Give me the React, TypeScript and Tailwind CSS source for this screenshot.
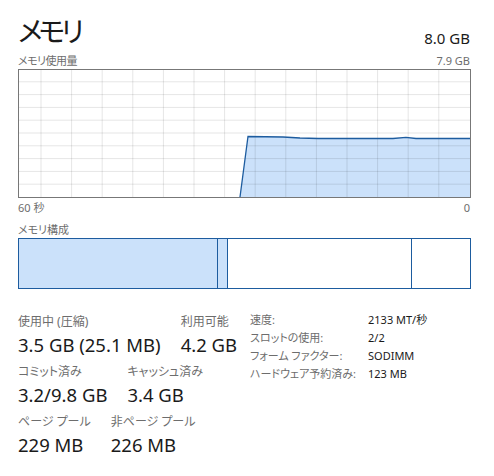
import React from 'react'

const font = "[font-family:'Noto_Sans','Noto_Sans_CJK_JP',sans-serif] [font-feature-settings:'palt']"

const vLines = Array.from({ length: 14 }, (_, i) => 23 + i * 30.6)
const hLines = Array.from({ length: 9 }, (_, i) => (i + 1) * 12.8)

function UsageGraph() {
  const pts = '222,128 230,67.5 265,68 282,69 300,69.5 375,69.5 388,68.4 398,69.5 452,69.5'
  return (
    <svg width="453" height="129" viewBox="0 0 453 129" className="block">
      <rect x="0" y="0" width="453" height="129" fill="#fff" />
      <polygon points={`${pts} 452,128.5 222,128.5`} fill="#cbe1fa" />
      {vLines.map((x) => (
        <line key={x} x1={x} y1="0" x2={x} y2="129" stroke="rgba(0,0,0,0.1)" strokeWidth="1" />
      ))}
      {hLines.map((y) => (
        <line key={y} x1="0" y1={y} x2="453" y2={y} stroke="rgba(0,0,0,0.1)" strokeWidth="1" />
      ))}
      <polyline points={pts} fill="none" stroke="#1d5c9f" strokeWidth="1.3" />
      <rect x="0.5" y="0.5" width="452" height="128" fill="none" stroke="#777" strokeWidth="1" />
    </svg>
  )
}

function Stat({ label, value }: { label: string; value: string }) {
  return (
    <div className="flex flex-col whitespace-nowrap">
      <span className="text-[12px] leading-[16px] text-[#6d6d6d]">{label}</span>
      <span className="text-[18.5px] leading-[26px] mt-[2px] text-[#1a1a1a]">{value}</span>
    </div>
  )
}

export default function App() {
  return (
    <div className={`w-[494px] h-[476px] bg-white pl-[18px] pr-[24px] pt-[13px] ${font}`}>
      <div className="flex items-end justify-between">
        <h1 className="text-[28px] leading-[36px] tracking-[-4px] text-[#1a1a1a]">メモリ</h1>
        <span className="text-[15px] leading-[20px] text-[#1a1a1a] mb-[1px]">8.0 GB</span>
      </div>
      <div className="flex justify-between text-[11px] leading-[16px] text-[#6d6d6d] mt-[4px]">
        <span className="tracking-[-0.5px]">メモリ使用量</span>
        <span>7.9 GB</span>
      </div>
      <UsageGraph />
      <div className="flex justify-between text-[11px] leading-[16px] text-[#6d6d6d] mt-[2px]">
        <span>60 秒</span>
        <span>0</span>
      </div>
      <div className="text-[11px] leading-[16px] text-[#6d6d6d] mt-[6px]">メモリ構成</div>
      <div className="flex h-[51px] w-[453px] border border-[#1d5c9f]">
        <div className="w-[199px] bg-[#cbe1fa] border-r border-[#1d5c9f]" />
        <div className="w-[10px] bg-[#cbe1fa] border-r border-[#1d5c9f]" />
        <div className="w-[184px] border-r border-[#1d5c9f]" />
        <div className="flex-1" />
      </div>
      <div className="flex items-start mt-[25px]">
        <div className="w-[232px] flex flex-col gap-[6px]">
          <div className="flex gap-[20px]">
            <Stat label="使用中 (圧縮)" value="3.5 GB (25.1 MB)" />
            <Stat label="利用可能" value="4.2 GB" />
          </div>
          <div className="flex gap-[20px]">
            <Stat label="コミット済み" value="3.2/9.8 GB" />
            <Stat label="キャッシュ済み" value="3.4 GB" />
          </div>
          <div className="flex gap-[20px]">
            <Stat label="ページ プール" value="229 MB" />
            <Stat label="非ページ プール" value="226 MB" />
          </div>
        </div>
        <div className="grid grid-cols-[118px_1fr] whitespace-nowrap text-[11px] leading-[18px] mt-[-3px]">
          <span className="text-[#6d6d6d]">速度:</span>
          <span className="text-[#1a1a1a]">2133 MT/秒</span>
          <span className="text-[#6d6d6d]">スロットの使用:</span>
          <span className="text-[#1a1a1a]">2/2</span>
          <span className="text-[#6d6d6d]">フォーム ファクター:</span>
          <span className="text-[#1a1a1a]">SODIMM</span>
          <span className="text-[#6d6d6d]">ハードウェア予約済み:</span>
          <span className="text-[#1a1a1a]">123 MB</span>
        </div>
      </div>
    </div>
  )
}
